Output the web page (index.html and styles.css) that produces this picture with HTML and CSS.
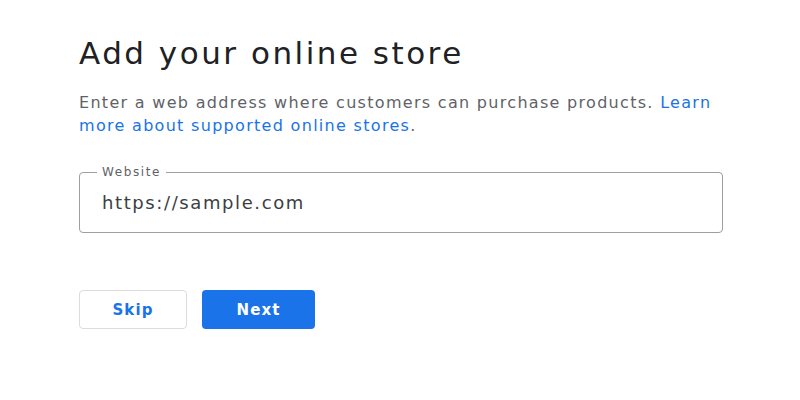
FILE: index.html
```html
<!DOCTYPE html>
<html>
<head>
<meta charset="utf-8">
<link rel="stylesheet" href="styles.css">
</head>
<body>
<main class="page">
  <h1 class="title">Add your online store</h1>
  <p class="desc">Enter a web address where customers can purchase products. <a class="link" href="#">Learn more about supported online stores</a>.</p>
  <div class="field">
    <span class="label">Website</span>
    <span class="value">https://sample.com</span>
  </div>
  <div class="actions">
    <button class="btn skip">Skip</button>
    <button class="btn next">Next</button>
  </div>
</main>
</body>
</html>
```
FILE: styles.css
```css
html, body {
  margin: 0;
  padding: 0;
  background: #ffffff;
}
.page {
  width: 644px;
  padding: 33px 0 0 79px;
  font-family: "DejaVu Sans", "Liberation Sans", sans-serif;
}
.title {
  margin: 0;
  font-weight: 400;
  font-size: 31px;
  line-height: 40px;
  color: #202124;
  letter-spacing: 2.5px;
}
.desc {
  margin: 18px 0 0 0;
  font-size: 16px;
  line-height: 23px;
  color: #5f6368;
  letter-spacing: 1.3px;
  width: 640px;
}
.link {
  color: #1a73e8;
  text-decoration: none;
}
.field {
  position: relative;
  margin-top: 35px;
  height: 59px;
  border: 1px solid #9aa0a6;
  border-radius: 4px;
  display: flex;
  align-items: center;
  padding-left: 22px;
}
.label {
  position: absolute;
  top: -8px;
  left: 17px;
  padding: 0 5px;
  background: #fff;
  font-size: 12px;
  line-height: 14px;
  color: #5f6368;
  letter-spacing: 1.6px;
}
.value {
  font-size: 18px;
  color: #3c4043;
  letter-spacing: 1.6px;
}
.actions {
  display: flex;
  gap: 15px;
  margin-top: 57px;
}
.btn {
  height: 39px;
  border-radius: 4px;
  font-family: "DejaVu Sans", sans-serif;
  font-weight: 700;
  font-size: 15px;
  letter-spacing: 1.1px;
}
.skip {
  width: 108px;
  background: #fff;
  border: 1px solid #dadce0;
  color: #1a73e8;
}
.next {
  width: 113px;
  background: #1a73e8;
  border: none;
  color: #fff;
}
```
